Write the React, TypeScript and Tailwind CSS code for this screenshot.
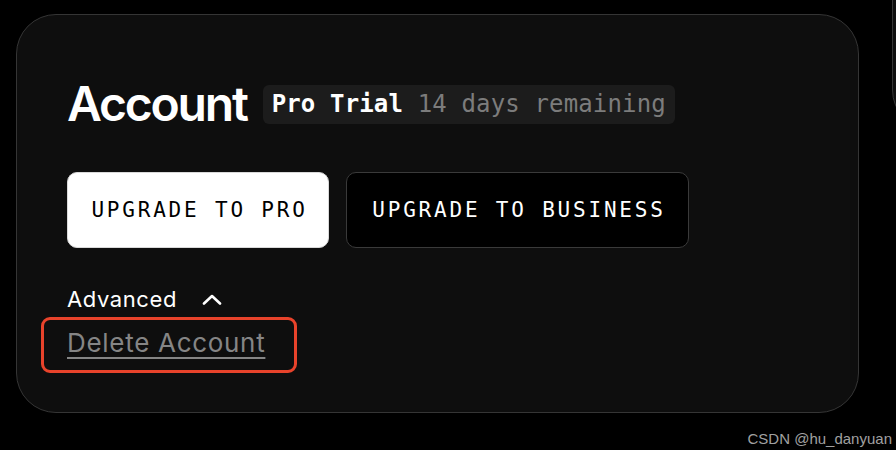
import React from "react";

export default function App() {
  return (
    <div className="relative w-[896px] h-[450px] bg-black overflow-hidden flex items-start gap-[33px]">
      <div className="ml-[16px] mt-[14px] w-[843px] h-[399px] shrink-0 rounded-[40px] border-[1.5px] border-[#353535] bg-[#0e0e0e] pl-[50px] pt-[65px] flex flex-col items-start">
        <div className="flex items-center gap-[16px]">
          <h1 className="text-[48px] leading-none font-semibold tracking-[-2.2px] text-white" style={{ fontFamily: "Inter, sans-serif" }}>
            Account
          </h1>
          <div
            className="h-[39px] px-[9px] rounded-[6px] bg-[#1c1c1c] flex items-center text-[24px] leading-none whitespace-pre tracking-[0.15px]"
            style={{ fontFamily: "'DejaVu Sans Mono', 'Liberation Mono', monospace" }}
          >
            <span className="font-bold text-white">Pro Trial</span>
            <span className="text-[#7c7c7c]"> 14 days remaining</span>
          </div>
        </div>

        <div
          className="mt-[44px] flex gap-[17px] text-[21px] tracking-[2.8px]"
          style={{ fontFamily: "'DejaVu Sans Mono', 'Liberation Mono', monospace" }}
        >
          <button className="w-[262px] h-[76px] rounded-[10px] border-[1.5px] border-[#d9d9d9] bg-white text-black flex items-center justify-center pl-[3px] pt-[2px]">
            UPGRADE TO PRO
          </button>
          <button className="w-[343px] h-[76px] rounded-[10px] border-[1.5px] border-[#3a3a3a] bg-black text-white flex items-center justify-center pl-[3px] pt-[2px]">
            UPGRADE TO BUSINESS
          </button>
        </div>

        <div className="mt-[37px] flex items-center gap-[25px] h-[28px]" style={{ fontFamily: "Inter, sans-serif" }}>
          <span className="text-[22px] leading-[28px] text-white tracking-[0.6px]">Advanced</span>
          <svg width="20" height="11" viewBox="0 0 20 11" fill="none" className="mt-[1px]">
            <path d="M2 9.5 L10 2 L18 9.5" stroke="white" strokeWidth="2.6" strokeLinecap="round" strokeLinejoin="round" />
          </svg>
        </div>

        <div className="relative mt-[14px]">
          <a
            href="#"
            className="block text-[26px] leading-[32px] text-[#858585] underline decoration-[1.5px] underline-offset-[5px] tracking-[0.7px]"
            style={{ fontFamily: "Inter, sans-serif" }}
          >
            Delete Account
          </a>
          <div className="absolute left-[-26px] top-[-10px] w-[256px] h-[56px] rounded-[9px] border-[3.5px] border-[#e8432b]" />
        </div>
      </div>

      <div className="shrink-0 w-[120px] h-[170px] -mt-[40px] rounded-[40px] border-[1.5px] border-[#353535] bg-[#0e0e0e]" />

      <div
        className="absolute right-[4px] bottom-[4px] text-[15px] leading-none text-[#a0a0a0]"
        style={{ fontFamily: "'Liberation Sans', Arial, sans-serif" }}
      >
        CSDN @hu_danyuan
      </div>
    </div>
  );
}
